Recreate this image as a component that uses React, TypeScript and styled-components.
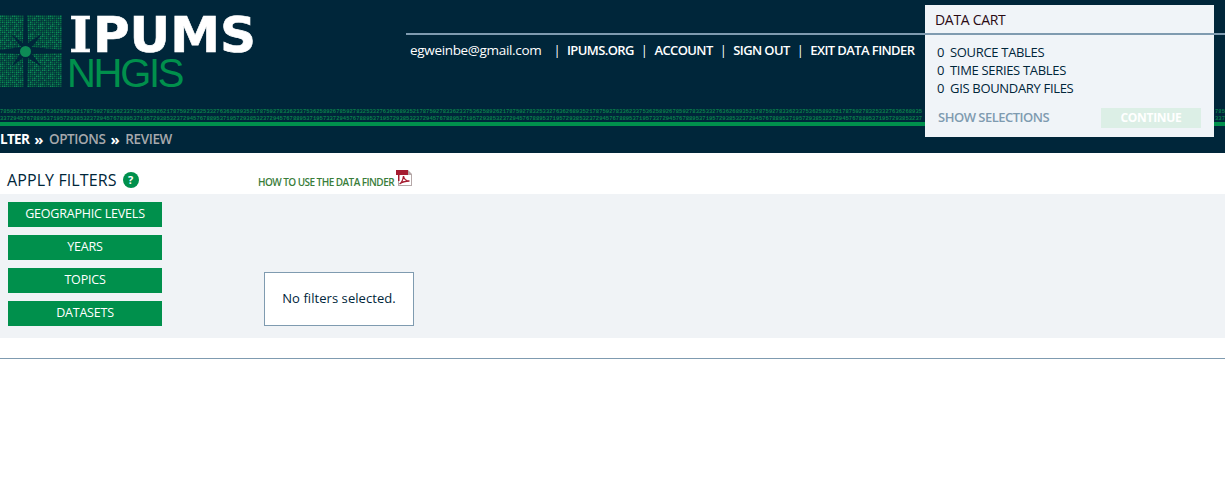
import React from "react";
import styled, { createGlobalStyle } from "styled-components";

const Global = createGlobalStyle`
  html, body { margin: 0; padding: 0; background: #fff; overflow: hidden; }
  body { font-family: "Open Sans", "Noto Sans", sans-serif; }
`;

const Page = styled.div`
  width: 1225px;
  height: 491px;
  overflow: hidden;
  position: relative;
`;
const Header = styled.header`
  position: relative;
  height: 153px;
  background: #00263a;
  display: flex;
  flex-direction: column;
`;
const TopRow = styled.div`
  display: flex;
  height: 109px;
`;
const Logo = styled.div`
  display: flex;
  width: 406px;
  padding-top: 15px;
  box-sizing: border-box;
`;
const Wordmark = styled.div`
  margin-left: 7px;
  display: flex;
  flex-direction: column;
`;
const Ipums = styled.div`
  display: flex;
  align-items: baseline;
  height: 39px;
  line-height: 39px;
  margin-top: 1px;
  color: #fff;
  font-family: "DejaVu Sans", sans-serif;
  font-weight: 700;
  font-size: 50px;
  letter-spacing: 0;
  -webkit-text-stroke: 0.6px #fff;
`;
const SerifI = styled.span`
  font-family: "DejaVu Serif", serif;
  font-size: 49px;
  margin-right: 1px;
`;
const Nhgis = styled.div`
  margin: 2px 0 0 -2px;
  height: 32px;
  line-height: 32px;
  color: #00904c;
  font-family: "Liberation Sans", sans-serif;
  font-size: 40px;
  letter-spacing: -2.3px;
`;
const Nav = styled.nav`
  flex: 1;
  margin-top: 33px;
  height: 2px;
  background: #7f9bb0;
  position: relative;
`;
const NavLinks = styled.div`
  position: absolute;
  left: 4px;
  top: 7px;
  display: flex;
  white-space: nowrap;
  color: #fff;
  font-size: 13px;
  line-height: 20px;
  font-weight: 600;
  letter-spacing: -0.6px;
`;
const Email = styled.span`
  font-size: 13.5px;
  font-weight: 400;
  letter-spacing: -0.33px;
  margin-right: 5px;
`;
const Sep = styled.span`
  margin: 0 7px;
  font-weight: 400;
`;
const Strip = styled.div`
  display: flex;
  justify-content: space-between;
  height: 13px;
  overflow: hidden;
  color: #0a7f4c;
  font-family: "Liberation Mono", monospace;
  font-size: 5.55px;
  line-height: 6.5px;
  white-space: nowrap;
  font-weight: 700;
`;
const StripPart = styled.div``;
const GreenBar = styled.div`
  height: 4px;
  background: #00904c;
`;
const Crumbs = styled.div`
  display: flex;
  align-items: center;
  height: 25px;
  padding-bottom: 2px;
  color: #a7a9ac;
  font-size: 13.5px;
  font-weight: 600;
  letter-spacing: -0.4px;
`;
const Current = styled.span`
  color: #fff;
  font-weight: 700;
  letter-spacing: -0.7px;
`;
const Chev = styled.span`
  color: #fff;
  font-size: 15px;
  margin: 0 6px 0 5px;
  font-weight: 700;
`;
const Cart = styled.aside`
  position: absolute;
  left: 925px;
  top: 5px;
  width: 289px;
  height: 132px;
  background: #f0f4f8;
  color: #00263a;
  display: flex;
  flex-direction: column;
`;
const CartTitle = styled.div`
  height: 28px;
  line-height: 29px;
  padding-left: 10px;
  font-size: 14px;
  font-weight: 500;
  letter-spacing: -0.3px;
  color: #2a0a14;
  border-bottom: 2px solid #7f9bb0;
`;
const CartRows = styled.ul`
  list-style: none;
  margin: 8px 0 0;
  padding: 0 0 0 12px;
`;
const CartRow = styled.li`
  display: flex;
  height: 18px;
  line-height: 18px;
  font-size: 13px;
  font-weight: 500;
  letter-spacing: -0.32px;
`;
const Count = styled.span`
  width: 13px;
`;
const CartFoot = styled.div`
  display: flex;
  align-items: center;
  justify-content: space-between;
  margin-top: 11px;
  padding: 0 13px 0 13px;
`;
const ShowSel = styled.span`
  color: #7f9bb0;
  font-size: 13px;
  font-weight: 600;
  letter-spacing: -0.5px;
  padding-bottom: 2px;
`;
const Continue = styled.span`
  width: 100px;
  height: 20px;
  line-height: 20px;
  text-align: center;
  background: #dcefe6;
  color: #fff;
  font-size: 12px;
  font-weight: 700;
  letter-spacing: -0.3px;
`;
const TitleRow = styled.div`
  display: flex;
  height: 41px;
`;
const TitleLeft = styled.div`
  display: flex;
  align-items: center;
  width: 258px;
  padding: 13px 0 0 7px;
  box-sizing: border-box;
`;
const Title = styled.h1`
  margin: 0;
  font-size: 16px;
  font-weight: 400;
  letter-spacing: 0.1px;
  color: #00263a;
`;
const Help = styled.span`
  width: 16px;
  height: 16px;
  border-radius: 50%;
  margin-left: 6px;
  background: #00904c;
  color: #fff;
  font-size: 11px;
  line-height: 16px;
  font-weight: 700;
  text-align: center;
`;
const HowTo = styled.a`
  display: flex;
  align-items: flex-start;
  padding-top: 17px;
  color: #3a7d3a;
  font-size: 10px;
  line-height: 14px;
  font-weight: 600;
  letter-spacing: -0.55px;
`;
const HowToLabel = styled.span`
  margin-top: 5px;
`;
const PdfIcon = styled.svg`
  margin-left: 2px;
`;
const Panel = styled.section`
  display: flex;
  align-items: flex-end;
  height: 144px;
  padding: 8px 0 12px 8px;
  box-sizing: border-box;
  background: #f0f3f6;
`;
const Filters = styled.div`
  display: flex;
  flex-direction: column;
  gap: 8px;
  width: 154px;
  margin-right: 102px;
`;
const FilterButton = styled.button`
  height: 25px;
  border: 0;
  padding: 0 0 2px;
  background: #00904c;
  color: #fff;
  font-family: inherit;
  font-size: 12.5px;
  font-weight: 500;
  letter-spacing: -0.2px;
`;
const Empty = styled.div`
  width: 150px;
  height: 54px;
  box-sizing: border-box;
  border: 1px solid #7f9bb0;
  background: #fff;
  color: #00263a;
  font-size: 13px;
  line-height: 50px;
  letter-spacing: 0.06px;
  text-align: center;
`;
const Rule = styled.hr`
  margin: 20px 0 0;
  border: 0;
  height: 1px;
  background: #7f9bb0;
`;

const row1 = "78592783253327636268935217875927833623375362589262178759278325332763626893521787592783362337536258926".repeat(3);
const row2 = "33729457678895371957293853237294576788953719572938532372945767889537195729385323729457678895371957".repeat(3);

const LogoMark = () => {
  const cells: React.ReactNode[] = [];
  for (let y = 0; y < 36; y++) {
    for (let x = 0; x < 31; x++) {
      const v = (x * 7 + y * 13 + ((x * y) % 5) * 3) % 6;
      cells.push(
        <rect
          key={`${x}-${y}`}
          x={x * 2}
          y={y * 2 + 0.5}
          width={1.5}
          height={1.5}
          fill={v < 2 ? "#0d8a55" : v < 4 ? "#067344" : "#0a5c44"}
        />
      );
    }
  }
  return (
    <svg width="62" height="73" viewBox="0 0 62 73" style={{ flex: "none" }}>
      {cells}
      <path
        fill="#00263a"
        d="M24 0h3l1 28 14-9-10 13 30 3v3l-30 1 10 13-14-9-1 30h-3l-1-30-12 9 9-13L0 38v-3l21-3-10-13 12 9z"
      />
      <circle cx="25.5" cy="36.5" r="5.500" fill="#0d8a55" />
    </svg>
  );
};

export default function App() {
  return (
    <Page>
      <Global />
      <Header>
        <TopRow>
          <Logo>
            <LogoMark />
            <Wordmark>
              <Ipums>
                <SerifI>I</SerifI>PUMS
              </Ipums>
              <Nhgis>NHGIS</Nhgis>
            </Wordmark>
          </Logo>
          <Nav>
            <NavLinks>
              <Email>egweinbe@gmail.com</Email>
              <Sep>|</Sep>IPUMS.ORG<Sep>|</Sep>ACCOUNT<Sep>|</Sep>SIGN OUT<Sep>|</Sep>EXIT DATA FINDER
            </NavLinks>
          </Nav>
        </TopRow>
        <Strip>
          <StripPart>
            {row1.slice(0, 277)}
            <br />
            {row2.slice(0, 277)}
          </StripPart>
          <StripPart>
            {row1.slice(0, 3)}
            <br />
            {row2.slice(0, 3)}
          </StripPart>
        </Strip>
        <GreenBar />
        <Crumbs>
          <Current>LTER</Current>
          <Chev>»</Chev>OPTIONS<Chev>»</Chev>REVIEW
        </Crumbs>
        <Cart>
          <CartTitle>DATA CART</CartTitle>
          <CartRows>
            <CartRow><Count>0</Count>SOURCE TABLES</CartRow>
            <CartRow><Count>0</Count>TIME SERIES TABLES</CartRow>
            <CartRow><Count>0</Count>GIS BOUNDARY FILES</CartRow>
          </CartRows>
          <CartFoot>
            <ShowSel>SHOW SELECTIONS</ShowSel>
            <Continue>CONTINUE</Continue>
          </CartFoot>
        </Cart>
      </Header>
      <TitleRow>
        <TitleLeft>
          <Title>APPLY FILTERS</Title>
          <Help>?</Help>
        </TitleLeft>
        <HowTo>
          <HowToLabel>HOW TO USE THE DATA FINDER</HowToLabel>
          <PdfIcon width="16" height="16" viewBox="0 0 16 16">
            <path d="M12 0l4 4v12H2v-5h1v4h12V5h-3.500z" fill="#b5a8a8" />
            <path d="M0 0h12v5H0z" fill="#a51c30" />
            <path d="M2 5h1.500v6H2z" fill="#a51c30" />
            <path d="M3.500 14c2.500-1.500 3.500-4.500 4-8 .5 3 2.500 5 6 5-3.500 0-7 .7-10 3z" fill="none" stroke="#a51c30" strokeWidth="1.300" />
          </PdfIcon>
        </HowTo>
      </TitleRow>
      <Panel>
        <Filters>
          <FilterButton>GEOGRAPHIC LEVELS</FilterButton>
          <FilterButton>YEARS</FilterButton>
          <FilterButton>TOPICS</FilterButton>
          <FilterButton>DATASETS</FilterButton>
        </Filters>
        <Empty>No filters selected.</Empty>
      </Panel>
      <Rule />
    </Page>
  );
}
